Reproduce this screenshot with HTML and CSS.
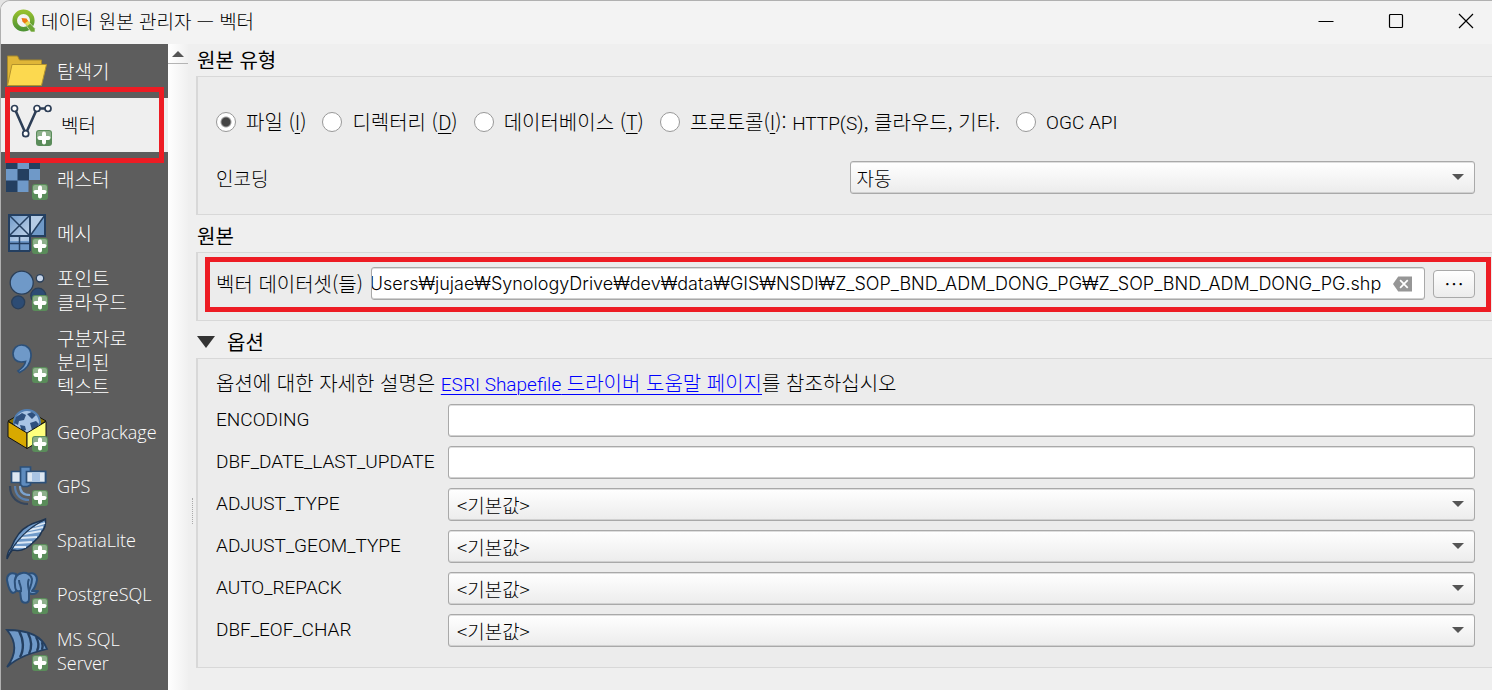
FILE: index.html
```html
<!DOCTYPE html>
<html lang="ko">
<head>
<meta charset="utf-8">
<meta name="viewport" content="width=device-width, initial-scale=1">
<title>데이터 원본 관리자 — 벡터</title>
<link rel="stylesheet" href="styles.css">
</head>
<body>
<svg class="defs" width="0" height="0" aria-hidden="true">
  <defs>
    <linearGradient id="sky" x1="0" y1="0" x2="1" y2="1">
      <stop offset="0" stop-color="#6f99c8"/><stop offset=".5" stop-color="#b5cce6"/><stop offset="1" stop-color="#6f99c8"/>
    </linearGradient>
    <linearGradient id="leaf" x1="0" y1="0" x2="0" y2="1">
      <stop offset="0" stop-color="#95bf2f"/><stop offset="1" stop-color="#4f9434"/>
    </linearGradient>
    <g id="plus">
      <rect x="26" y="26" width="16" height="16" rx="3" fill="#5a8c5a"/>
      <path d="M27 34V29q0-2 2-2h10q2 0 2 2v5z" fill="#8db08b"/>
      <path d="M34 29.500v9M29.500 34h9" stroke="#fff" stroke-width="4" stroke-linecap="round"/>
    </g>
  </defs>
</svg>
<div class="window">
  <header class="titlebar">
    <svg class="logo" viewBox="0 0 24 24" aria-hidden="true">
      <circle cx="11.500" cy="11.500" r="8.800" fill="none" stroke="url(#leaf)" stroke-width="4.600"/>
      <path d="M12 13.500l3-2.500 8 8.500v3.500h-4z" fill="#6da534" stroke="#f3f3f3" stroke-width=".600"/>
      <path d="M11.500 13l3.500-2.500 3.500 4-3 2.500z" fill="#e6df5a"/>
      <path d="M9.500 9l5 .500 1.500 2.500-3.500 2.500-2-2z" fill="#ee7913"/>
    </svg>
    <h1>데이터 원본 관리자 — 벡터</h1>
    <div class="window-buttons">
      <button type="button" aria-label="최소화"><svg viewBox="0 0 16 16"><path d="M.500 8.500h15"/></svg></button>
      <button type="button" aria-label="최대화"><svg viewBox="0 0 16 16"><rect x="1.500" y="1.500" width="13" height="13" rx="1"/></svg></button>
      <button type="button" aria-label="닫기"><svg viewBox="0 0 16 16"><path d="M1 1l14 14M15 1L1 15"/></svg></button>
    </div>
  </header>
  <div class="body">
    <nav class="sidebar">
      <a class="item" href="#browser">
        <svg viewBox="0 0 42 42"><path d="M1.500 36V6h10l2 4h22v6l-27 1z" fill="#e0b637" stroke="#a88a2c"/><path d="M1.500 35.500L6 14.500h34.500l-5 21z" fill="#fcd94f" stroke="#b3922c"/></svg>
        <span>탐색기</span></a>
      <a class="item selected" href="#vector" aria-current="page">
        <svg viewBox="0 0 42 42"><g stroke="#2d3e56" fill="none"><path d="M5.500 6.500l9 20.500M17 27L26 7M30 4.500h5" stroke-width="2.600"/><g fill="#fff" stroke-width="1.700"><circle cx="4.500" cy="4.500" r="3"/><circle cx="27" cy="4.500" r="3"/><circle cx="38" cy="4.500" r="3"/><circle cx="15.700" cy="29.700" r="3"/></g></g><use href="#plus"/></svg>
        <span>벡터</span></a>
      <a class="item" href="#raster">
        <svg viewBox="0 0 42 42"><path fill="#6f99c8" d="M0 0h34v22H22.500v12H0z"/><path fill="#243f60" d="M0 0h11.500v11H0zM23 0h11v11H23zM11.500 11H23v11.500H11.500zM0 22.500h11.500V34H0z"/><use href="#plus"/></svg>
        <span>래스터</span></a>
      <a class="item" href="#mesh">
        <svg viewBox="0 0 42 42"><path d="M3 3h36v21H24v15H3z" fill="url(#sky)"/><path d="M24 24V3h15z" fill="#b5cce6"/><path d="M39 3v21H24z" fill="#6f99c8"/><path d="M3 29h21v10H3z" fill="#6f99c8"/><path d="M3 3h36v21H3zM24 3v36M3 3v36h21" fill="none" stroke="#243f60" stroke-width="2"/><path d="M3 3l21 21M24 3L3 24M39 3L24 24M13.500 24v15M3 31.500h21" fill="none" stroke="#243f60" stroke-width="1.500"/><use href="#plus"/></svg>
        <span>메시</span></a>
      <a class="item two" href="#pointcloud">
        <svg viewBox="0 0 42 42"><g stroke="#2a3f59" stroke-width="1.300"><circle cx="15.700" cy="13.700" r="11.500" fill="#6f99c8"/><circle cx="34" cy="9.300" r="3.700" fill="#c6d5ea"/><circle cx="32.300" cy="26.700" r="7.500" fill="#2d4c74"/><circle cx="12.200" cy="33.300" r="6.500" fill="#2d4c74"/></g><use href="#plus"/></svg>
        <span>포인트<br>클라우드</span></a>
      <a class="item three" href="#delimited">
        <svg viewBox="0 0 42 42"><path d="M15.500 4c6 0 10 4.500 9.500 11.500-.600 7.500-5 13-11.500 16l-1.500-1.500c4.500-3 7-6 7.500-9.500-1.500.500-3 .500-4.500.500-5 0-8-3.500-8-8.500 0-5 4-8.500 8.500-8.500z" fill="#6f99c8" stroke="#2c5079" stroke-width="1.700"/><use href="#plus"/></svg>
        <span>구분자로<br>분리된<br>텍스트</span></a>
      <a class="item latin-name" href="#geopackage">
        <svg viewBox="0 0 42 42"><path d="M2 11l19-11 19 11-19 12z" fill="#8a7200" stroke="#111"/><circle cx="21" cy="13" r="13" fill="#a9c4e4" stroke="#527fb3" stroke-width="2"/><path d="M10 7l6-4 4 2-2 5-5 1-1 4-4-2zM21 4l5-2 4 3-4 4zM24 13l6-2 3 3-3 5-4 1zM14 15l5 1 1 4-4 2z" fill="#2e507e"/><path d="M2 11.500L21 23v15.500L2 27z" fill="#d8a900" stroke="#111"/><path d="M40 11.500L21 23v15.500L40 27z" fill="#ffff7d" stroke="#111"/><use href="#plus"/></svg>
        <span>GeoPackage</span></a>
      <a class="item latin-name" href="#gps">
        <svg viewBox="0 0 42 42"><g fill="none" stroke-width="2.200"><path d="M14 22c0 6 3 9 10 9" stroke="#7ba3d0"/><path d="M9 22c0 9 6 14 14 14" stroke="#587fae"/><path d="M4 22c0 12 8 18 18 18" stroke="#34455c"/></g><g stroke="#2c5079" stroke-width="1.700"><path d="M5.500 7.500H39.500v11H5.500z" fill="#dde7f2"/><path d="M14.500 3h10v18l-3 1.500h-5l-2-2z" fill="#5f8cbe"/><path d="M20.500 7.500h19v11h-19z" fill="#dde7f2"/></g><path d="M26 8.500h8v9h-8z" fill="#a9c4e4"/><use href="#plus"/></svg>
        <span>GPS</span></a>
      <a class="item latin-name" href="#spatialite">
        <svg viewBox="0 0 42 42"><path d="M1 41c0-5 1-8 4-11C9 20 14 12 22 8 28 4 34 4 39.500 1c.500 5 0 9-4 13-2 6-6 8-9 11-4 4-7 6-11 7-4 1-6 0-9 0-3 3-4 5-5.500 9z" fill="#6f99c8" stroke="#1e3552" stroke-width="1.500"/><path d="M11 25l15-1M8 29l12 0M15 20l16-1M18 16l17-3M23 12l14-3M29 8l10-3" stroke="#dce8f5" stroke-width="1.800"/><path d="M2 38C9 24 22 10 39 1.500" fill="none" stroke="#1e3552" stroke-width="1.300"/><use href="#plus"/></svg>
        <span>SpatiaLite</span></a>
      <a class="item latin-name" href="#postgresql">
        <svg viewBox="0 0 42 42"><g fill="#6f99c8" stroke="#2c5079" stroke-width="2" stroke-linejoin="round"><path d="M22 2c6-2 9 1 9 6-1 5-3 9-5 11l6 0c-2 3-5 4-9 2z"/><path d="M10 2C4 0 1 3 1 8c1 6 3 12 6 13 2 0 3-2 5-4z"/><path d="M16 1c5-1 9 2 10 6 0 5-2 8-3 12v8c0 5-7 5-8 0l-1-8c-4 1-5-2-5-6-1-7 1-11 7-12z"/><path d="M13 8c0 5 3 6 2 12M23 7c-2 4-1 8 0 12" fill="none"/></g><use href="#plus"/></svg>
        <span>PostgreSQL</span></a>
      <a class="item two latin-name" href="#mssql">
        <svg viewBox="0 0 42 42"><path d="M1 1c20 0 35 6 40 19C25 24 12 28 1 38 10 26 11 13 1 1z" fill="#6f99c8" stroke="#243f60" stroke-width="1.800"/><path d="M13 2c5 9 5 19 1 26M22 4c4 8 4 15 1 21M30 8c3 5 3 10 1 14M36 13c1 3 1 5 0 8" fill="none" stroke="#243f60" stroke-width="2.400"/><use href="#plus"/></svg>
        <span>MS SQL<br>Server</span></a>
      <div class="mark mark-item"></div>
    </nav>
    <div class="scrollbar"><button type="button" aria-label="위로 스크롤"></button></div>
    <div class="splitter"></div>
    <main class="content">
      <h2>원본 유형</h2>
      <section class="group type">
        <div class="radios">
          <label><input type="radio" name="kind" checked><span>파일 (<u>I</u>)</span></label>
          <label><input type="radio" name="kind"><span>디렉터리 (<u>D</u>)</span></label>
          <label><input type="radio" name="kind"><span>데이터베이스 (<u>T</u>)</span></label>
          <label><input type="radio" name="kind"><span>프로토콜(<u>I</u>): <span class="latin">HTTP(S)</span>, 클라우드, 기타.</span></label>
          <label><input type="radio" name="kind"><span class="latin">OGC API</span></label>
        </div>
        <div class="halves">
          <label for="enc">인코딩</label>
          <div class="combo"><select id="enc"><option>자동</option></select></div>
        </div>
      </section>
      <h2 class="spaced">원본</h2>
      <section class="group source">
        <label for="dataset">벡터 데이터셋(들)</label>
        <div class="path">
          <input id="dataset" type="text" value="C:₩Users₩jujae₩SynologyDrive₩dev₩data₩GIS₩NSDI₩Z_SOP_BND_ADM_DONG_PG₩Z_SOP_BND_ADM_DONG_PG.shp">
          <button type="button" aria-label="지우기"><svg viewBox="0 0 20 16"><path d="M0 8l5.500-8H20v16H5.500z" fill="#969696"/><path d="M7.500 4l8 8M15.500 4l-8 8" stroke="#fff" stroke-width="1.800"/></svg></button>
        </div>
        <button type="button" class="browse" aria-label="찾아보기">…</button>
        <div class="mark mark-source"></div>
      </section>
      <h2 class="spaced"><button type="button" class="fold" aria-expanded="true">옵션</button></h2>
      <section class="group options">
        <p>옵션에 대한 자세한 설명은 <a href="#help"><span class="latin">ESRI Shapefile</span> 드라이버 도움말 페이지</a>를 참조하십시오</p>
        <div class="form">
          <label for="o1">ENCODING</label><input id="o1" type="text">
          <label for="o2">DBF_DATE_LAST_UPDATE</label><input id="o2" type="text">
          <label for="o3">ADJUST_TYPE</label><div class="combo"><select id="o3"><option>&lt;기본값&gt;</option></select></div>
          <label for="o4">ADJUST_GEOM_TYPE</label><div class="combo"><select id="o4"><option>&lt;기본값&gt;</option></select></div>
          <label for="o5">AUTO_REPACK</label><div class="combo"><select id="o5"><option>&lt;기본값&gt;</option></select></div>
          <label for="o6">DBF_EOF_CHAR</label><div class="combo"><select id="o6"><option>&lt;기본값&gt;</option></select></div>
        </div>
      </section>
    </main>
  </div>
</div>
<script src="main.js"></script>
</body>
</html>
```

FILE: styles.css
```css
* { box-sizing: border-box; }
body {
  margin: 0;
  background: #e4e4e4;
  color: #000;
  font: 300 20px/24px "Noto Sans CJK KR", sans-serif;
}
.defs { position: absolute; }
h1, h2, p { margin: 0; font-weight: 400; font-size: 20px; }
button, input, select { font: inherit; color: inherit; margin: 0; }
button { border: 0; padding: 0; background: none; }
.latin { font-family: Roboto, "Noto Sans CJK KR", sans-serif; font-size: 19px; line-height: 1; }

.window {
  display: flex;
  flex-direction: column;
  min-height: 100vh;
  overflow: hidden;
  background: #efefef;
  border: solid #b0b0b0;
  border-width: 1px 0 0 1px;
  border-top-left-radius: 10px;
}
.titlebar { display: flex; align-items: center; height: 43px; padding: 0 0 3px 11px; background: #f3f3f3; }
.titlebar h1 { padding-left: 5px; font-size: 19px; font-weight: 300; }
.logo { width: 24px; height: 24px; }
.window-buttons { display: flex; margin-left: auto; margin-right: -9px; }
.window-buttons button { display: flex; justify-content: center; align-items: center; width: 70px; height: 40px; }
.window-buttons svg { width: 16px; height: 16px; fill: none; stroke: #000; stroke-width: 1.2; }

.body { display: flex; flex: 1; }
.sidebar { position: relative; flex: none; width: 167px; background: #5d5d5d; }
.item {
  display: flex;
  align-items: center;
  gap: 9px;
  height: 54px;
  padding-left: 5px;
  color: #fff;
  font-family: "Liberation Sans", "Noto Sans CJK KR", sans-serif;
  font-size: 19px;
  text-decoration: none;
}
.item span { padding-top: 4px; }
.item svg { flex: none; width: 42px; height: 42px; overflow: visible; }
.item.selected { padding-left: 9px; color: #000; background: #efefef; }
.item.latin-name { font-family: "Open Sans", sans-serif; font-size: 18px; }
.item.latin-name span { padding-top: 2px; }
.item.two { height: 60px; }
.item.three { height: 84px; }
.scrollbar { flex: none; width: 20px; background: linear-gradient(90deg, #fff, #f0f0f0); }
.scrollbar button {
  display: flex;
  justify-content: center;
  align-items: center;
  width: 20px;
  height: 20px;
  border-bottom: 1px solid #b4b4b4;
}
.scrollbar button::before { content: ""; border: solid transparent; border-width: 0 6px 6px; border-bottom-color: #555; }
.splitter { display: flex; flex: none; align-items: center; justify-content: flex-end; width: 8px; }
.splitter::before { content: ""; height: 26px; margin-top: 288px; margin-right: 3px; border-left: 1px dotted #aaa; }

.content { flex: 1; min-width: 0; }
h2 { height: 32px; padding: 4px 0 4px 1px; }
h2.spaced { height: 37px; padding-top: 9px; }
.group { border: solid #d8d8d8; border-width: 1px 0 1px 2px; background: #ececec; }
.type { padding: 32px 17px 20px 18px; }
.radios { display: flex; gap: 16px; height: 26px; align-items: center; white-space: nowrap; }
.radios label { display: flex; align-items: center; gap: 10px; }
.radios input {
  appearance: none;
  width: 20px;
  height: 20px;
  border: 1px solid #989898;
  border-radius: 50%;
  background: #fff;
}
.radios input:checked { background: radial-gradient(circle, #444 4px, #fff 6px); }
u { text-underline-offset: 3px; text-decoration-thickness: 1px; }
.halves { display: grid; grid-template-columns: 1fr 1fr; gap: 8px; align-items: center; padding-top: 26px; }
.halves label { font-size: 19px; }
.combo { position: relative; }
.combo::after {
  content: "";
  position: absolute;
  right: 11px;
  top: 13px;
  border: solid transparent;
  border-width: 6px 6px 0;
  border-top-color: #555;
  pointer-events: none;
}
select, input[type="text"] {
  display: block;
  width: 100%;
  height: 33px;
  padding: 0 7px;
  border: 1px solid #a9a9a9;
  border-radius: 3px;
  box-shadow: inset 0 -1px #d0d0d0, inset 0 1px #dedede;
  background: #fff;
}
select { appearance: none; padding: 0 6px; font-size: 19px; background: linear-gradient(#fff, #ececec); }
.form select { padding-left: 8px; }
.source { position: relative; display: flex; align-items: center; gap: 8px; height: 69px; padding: 0 17px 6px 18px; }
.path { position: relative; flex: 1; }
.path input[type="text"] { padding: 0 43px 0 0; font-family: Inter, sans-serif; font-size: 18px; }
.path button { position: absolute; top: 9px; right: 13px; display: flex; }
.path svg { width: 19px; height: 16px; }
.browse { width: 42px; height: 28px; border: 1px solid #a9a9a9; border-radius: 4px; background: linear-gradient(#fff, #ececec); }
.fold { display: flex; align-items: center; gap: 12px; }
.fold::before { content: ""; border: solid transparent; border-width: 12px 9px 0; border-top-color: #333; }
.options { padding: 12px 17px 20px 18px; }
.options p { height: 24px; font-weight: 300; white-space: nowrap; }
a { color: #00f; text-underline-offset: 3px; text-decoration-thickness: 1px; }
.form { display: grid; grid-template-columns: 222px 1fr; column-gap: 10px; row-gap: 9px; padding-top: 9px; }
.form label { padding-top: 4px; font-family: Roboto, sans-serif; font-size: 19px; }

.mark { position: absolute; border: 5px solid #ed1c24; pointer-events: none; }
.mark-item { left: 4px; top: 43px; width: 159px; height: 76px; }
.mark-source { left: 7px; right: 1px; top: 4px; height: 55px; }
```

FILE: main.js
```js
// Keep the file name at the end of the path in view.
const dataset = document.getElementById('dataset');
dataset.scrollLeft = dataset.scrollWidth;
```
